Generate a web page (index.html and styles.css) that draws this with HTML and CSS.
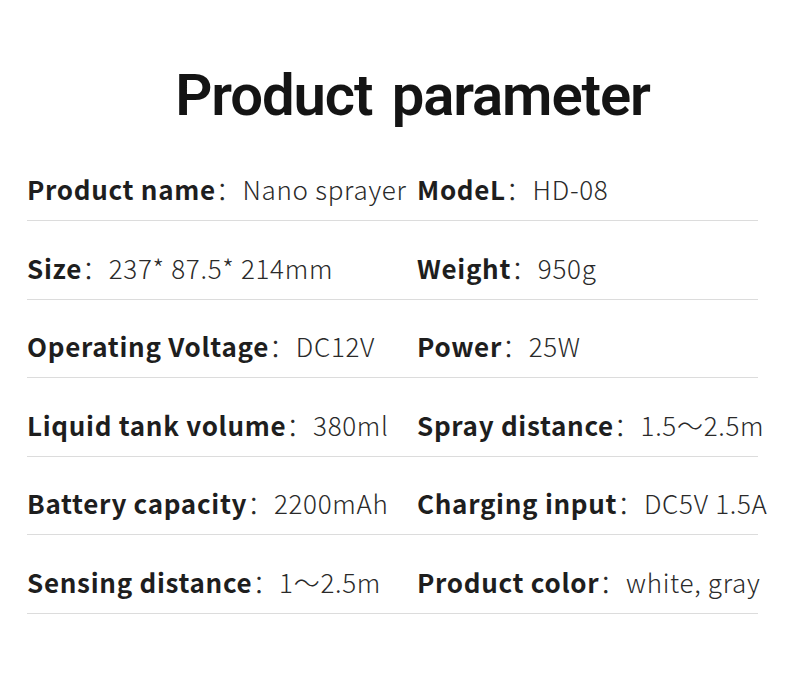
FILE: index.html
```html
<!DOCTYPE html>
<html>
<head>
<meta charset="utf-8">
<link rel="stylesheet" href="styles.css">
</head>
<body>
<div class="page">
  <h1 class="title">Product parameter</h1>
  <div class="table">
    <div class="row">
      <div class="cell c1"><b>Product name</b>：Nano sprayer</div>
      <div class="cell c2"><b>ModeL</b>：HD-08</div>
    </div>
    <div class="row">
      <div class="cell c1"><b>Size</b>：237* 87.5* 214mm</div>
      <div class="cell c2"><b>Weight</b>：950g</div>
    </div>
    <div class="row">
      <div class="cell c1"><b>Operating Voltage</b>：DC12V</div>
      <div class="cell c2"><b>Power</b>：25W</div>
    </div>
    <div class="row">
      <div class="cell c1"><b>Liquid tank volume</b>：380ml</div>
      <div class="cell c2"><b>Spray distance</b>：1.5～2.5m</div>
    </div>
    <div class="row">
      <div class="cell c1"><b>Battery capacity</b>：2200mAh</div>
      <div class="cell c2"><b>Charging input</b>：DC5V 1.5A</div>
    </div>
    <div class="row">
      <div class="cell c1"><b>Sensing distance</b>：1～2.5m</div>
      <div class="cell c2"><b>Product color</b>：white, gray</div>
    </div>
  </div>
</div>
</body>
</html>
```
FILE: styles.css
```css
html, body { margin: 0; padding: 0; background: #fff; }
.page { width: 790px; height: 690px; overflow: hidden; }
.title {
  margin: 0;
  padding: 59px 0 0 35px;
  height: 72px;
  text-align: center;
  font-family: Roboto, "Liberation Sans", Arial, sans-serif;
  font-weight: 600;
  font-size: 58px;
  line-height: 72px;
  letter-spacing: -1.1px;
  word-spacing: 6px;
  color: #141414;
}
.table { margin: 0 32px 0 27px; padding-top: 11.4px; }
.row {
  display: flex;
  box-sizing: border-box;
  height: 78.6px;
  padding-bottom: 13px;
  border-bottom: 1.5px solid #dcdcdc;
  align-items: flex-end;
  font-family: "Noto Sans CJK SC", "Noto Sans", sans-serif;
  font-size: 26px;
  line-height: 36px;
  color: #2a2a2a;
  letter-spacing: 0.7px;
  white-space: nowrap;
}
.cell b { font-weight: bold; color: #1e1e1e; }
.c1 { width: 390px; flex-shrink: 0; font-weight: 300; }
.c2 { flex-shrink: 0; font-weight: 300; }
```
